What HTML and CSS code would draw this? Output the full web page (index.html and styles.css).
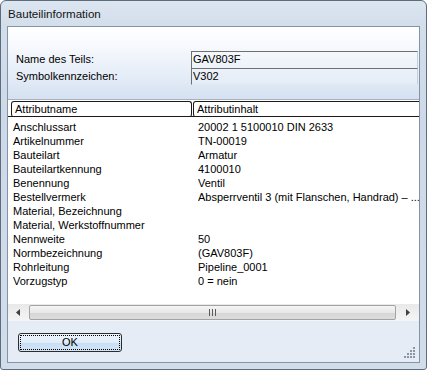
FILE: index.html
```html
<!DOCTYPE html>
<html>
<head>
<meta charset="utf-8">
<link rel="stylesheet" href="styles.css">
</head>
<body>
<div class="window">
  <div class="titlebar"><span class="title">Bauteilinformation</span></div>
  <div class="client">
    <div class="infopanel">
      <div class="label">Name des Teils:</div>
      <div class="field first">GAV803F</div>
      <div class="label">Symbolkennzeichen:</div>
      <div class="field">V302</div>
    </div>
    <div class="list">
      <div class="lhead">
        <div class="hcell hname">Attributname</div>
        <div class="hcell hval">Attributinhalt</div>
      </div>
      <div class="lbody">
        <div class="row"><span class="n">Anschlussart</span><span class="v">20002 1 5100010 DIN 2633</span></div>
        <div class="row"><span class="n">Artikelnummer</span><span class="v">TN-00019</span></div>
        <div class="row"><span class="n">Bauteilart</span><span class="v">Armatur</span></div>
        <div class="row"><span class="n">Bauteilartkennung</span><span class="v">4100010</span></div>
        <div class="row"><span class="n">Benennung</span><span class="v">Ventil</span></div>
        <div class="row"><span class="n">Bestellvermerk</span><span class="v">Absperrventil 3 (mit Flanschen, Handrad) – ...</span></div>
        <div class="row"><span class="n">Material, Bezeichnung</span><span class="v"></span></div>
        <div class="row"><span class="n">Material, Werkstoffnummer</span><span class="v"></span></div>
        <div class="row"><span class="n">Nennweite</span><span class="v">50</span></div>
        <div class="row"><span class="n">Normbezeichnung</span><span class="v">(GAV803F)</span></div>
        <div class="row"><span class="n">Rohrleitung</span><span class="v">Pipeline_0001</span></div>
        <div class="row"><span class="n">Vorzugstyp</span><span class="v">0 = nein</span></div>
      </div>
      <div class="hscroll">
        <div class="arrow">
          <svg width="5" height="7" viewBox="0 0 5 7"><path d="M4 0 L4 7 L0 3.5 Z" fill="#404040"/></svg>
        </div>
        <div class="thumb">
          <svg width="7" height="7" viewBox="0 0 7 7"><path d="M0.5 0 V7 M3.5 0 V7 M6.5 0 V7" stroke="#5a5a5a" stroke-width="1"/></svg>
        </div>
        <div class="arrow right">
          <svg width="5" height="7" viewBox="0 0 5 7"><path d="M1 0 L1 7 L5 3.5 Z" fill="#404040"/></svg>
        </div>
      </div>
    </div>
    <div class="footer">
      <button class="okbtn"><span class="focus">OK</span></button>
      <svg class="grip" width="12" height="12" viewBox="0 0 12 12">
        <g fill="#8a96a6">
          <rect x="9" y="0" width="2" height="2"/>
          <rect x="6" y="3" width="2" height="2"/><rect x="9" y="3" width="2" height="2"/>
          <rect x="3" y="6" width="2" height="2"/><rect x="6" y="6" width="2" height="2"/><rect x="9" y="6" width="2" height="2"/>
          <rect x="0" y="9" width="2" height="2"/><rect x="3" y="9" width="2" height="2"/><rect x="6" y="9" width="2" height="2"/><rect x="9" y="9" width="2" height="2"/>
        </g>
      </svg>
    </div>
  </div>
</div>
</body>
</html>
```

FILE: styles.css
```css
* { box-sizing: border-box; }
html, body { margin: 0; padding: 0; background: #ffffff; }
body {
  width: 427px;
  height: 370px;
  font-family: "Liberation Sans", Arial, sans-serif;
  font-size: 11px;
  color: #000;
}
.window {
  width: 427px;
  height: 370px;
  border: 1px solid #5e6c7e;
  border-radius: 6px 6px 3px 3px;
  background: linear-gradient(180deg, #dce6f1 0px, #d3deeb 25px, #cdd9e8 120px, #d2ddea 370px);
  padding: 0 6px 6px 6px;
  display: flex;
  flex-direction: column;
}
.titlebar {
  height: 25px;
  display: flex;
  align-items: center;
  padding-left: 1px;
  padding-bottom: 1px;
}
.title {
  font-size: 11.6px;
  color: #141414;
}
.client {
  flex: 1;
  border: 1px solid #8593a6;
  display: flex;
  flex-direction: column;
  background: #e5ecf5;
}
.infopanel {
  height: 72px;
  background: linear-gradient(180deg, #ffffff 0px, #f6f9fd 20px, #e4ecf7 50px, #d5e1f1 72px);
  padding: 24px 0 0 8px;
  display: grid;
  grid-template-columns: 175px 227px;
  grid-auto-rows: 17px;
}
.label {
  line-height: 16px;
}
.field {
  border-left: 1px solid #6f6f6f;
  border-top: 1px solid #6f6f6f;
  border-right: 1px solid #c6ced8;
  line-height: 15px;
  padding-left: 1px;
  background: rgba(255,255,255,0.15);
}
.field:not(.first) {
  border-bottom: 1px solid #e2e8f0;
}
.list {
  height: 222px;
  background: #ffffff;
  border-top: 1px solid #a7b0bb;
  display: flex;
  flex-direction: column;
}
.lhead {
  height: 17px;
  display: flex;
  padding: 1px 0 0 3px;
  border-bottom: 1px solid #1a1a1a;
  overflow: hidden;
}
.hcell {
  height: 16px;
  border: 1px solid #1a1a1a;
  border-bottom-color: transparent;
  border-radius: 3px;
  padding-left: 3px;
  line-height: 14px;
  white-space: nowrap;
  flex: none;
}
.hname { width: 181px; }
.hval { width: 240px; margin-left: 1px; }
.lbody {
  flex: 1;
  padding: 3px 0 0 5px;
  overflow: hidden;
}
.row {
  height: 14px;
  line-height: 14px;
  display: flex;
  white-space: nowrap;
}
.n { width: 185px; flex: none; }
.v { flex: 1; overflow: hidden; white-space: nowrap; }
.hscroll {
  height: 17px;
  background: linear-gradient(180deg, #e9e9e9, #f4f4f4);
  border-bottom: 1px solid #f2f4f7;
  display: flex;
  align-items: center;
}
.arrow {
  width: 20px;
  height: 16px;
  display: flex;
  align-items: center;
  justify-content: center;
  flex: none;
}
.arrow.right { width: 23px; }
.thumb {
  margin-left: 1px;
  height: 15px;
  flex: 1;
  border: 1px solid #a3a3a3;
  border-radius: 2px;
  background: linear-gradient(180deg, #f5f5f5 0%, #e8e8e8 50%, #d6d6d6 51%, #dcdcdc 100%);
  display: flex;
  align-items: center;
  justify-content: center;
}
.footer {
  flex: 1;
  background: #e6ecf5;
  padding: 12px 0 0 10px;
  position: relative;
}
.okbtn {
  width: 104px;
  height: 19px;
  border: 1px solid #2c2c2c;
  border-radius: 3px;
  background: linear-gradient(180deg, #eef5fc 0%, #dfecf9 50%, #c8def4 51%, #d2e5f8 100%);
  padding: 1px;
  font-family: "Liberation Sans", Arial, sans-serif;
  font-size: 11px;
  color: #000;
  display: flex;
}
.focus {
  flex: 1;
  border: 1px dotted #000;
  border-radius: 1px;
  line-height: 13px;
  text-align: center;
}
.grip {
  position: absolute;
  right: 3px;
  bottom: 3px;
}
```
